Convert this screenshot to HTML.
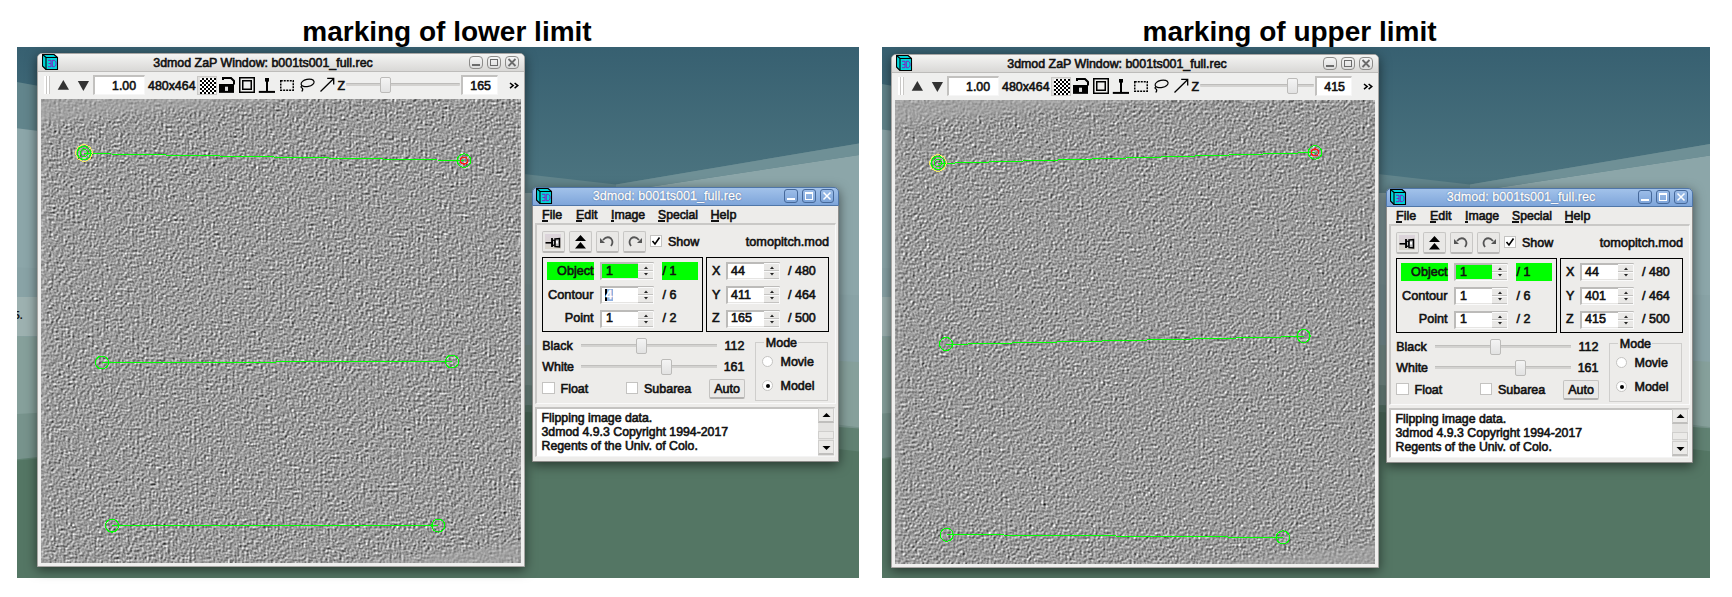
<!DOCTYPE html>
<html><head><meta charset="utf-8"><style>
html,body{margin:0;padding:0;}
body{width:1732px;height:597px;position:relative;overflow:hidden;background:#fff;font-family:"Liberation Sans", sans-serif;}
.t{position:absolute;white-space:pre;line-height:1;font-family:"Liberation Sans", sans-serif;-webkit-text-stroke:0.6px currentColor;}
.h{-webkit-text-stroke:0;}
</style></head><body>
<div class="t" style="left:147px;width:600px;text-align:center;top:17.80px;font-size:28px;color:#000;font-weight:700;-webkit-text-stroke:0">marking of lower limit</div>
<div class="t" style="left:989.5px;width:600px;text-align:center;top:17.80px;font-size:28px;color:#000;font-weight:700;-webkit-text-stroke:0">marking of upper limit</div>
<div style="position:absolute;left:17px;top:47px;width:842px;height:531px;overflow:hidden"><div style="position:absolute;left:-17px;top:-47px;width:1000px;height:600px"><svg width="1000" height="600" style="position:absolute;left:0;top:0">
<defs><linearGradient id="tg" x1="0" y1="0" x2="0" y2="1"><stop offset="0" stop-color="#365f70"/><stop offset="1" stop-color="#4e7681"/></linearGradient></defs>
<rect x="0" y="40" width="1000" height="160" fill="url(#tg)"/>
<polygon points="0,79 524,174 616,184.5 859,143.5 1000,120 1000,600 0,600" fill="#62858c"/>
<polygon points="0,126 524,193 616,192 859,155 1000,134 1000,600 0,600" fill="#8ca6a9"/>
<polygon points="616,184.5 859,143.5 880,140 880,155 859,155 616,192" fill="#6f9096"/>
<polygon points="0,267 1000,300 1000,600 0,600" fill="#89a3a6"/>
<rect x="0" y="297" width="40" height="39" fill="#9db1b0"/>
<polygon points="0,336 528,345 880,363 1000,363 1000,600 0,600" fill="#86a09b"/>
<polygon points="0,415 528,385 880,430 1000,430 1000,600 0,600" fill="#77938c"/><polygon points="0,461 528,405 880,430 1000,430 1000,600 0,600" fill="#608172"/>
<polygon points="0,462 528,412 880,454 1000,454 1000,600 0,600" fill="#547664"/>
<text x="14" y="319" font-family="Liberation Sans" font-size="10.5" font-weight="bold" fill="#111">5.</text>
</svg></div></div>
<div style="position:absolute;left:882px;top:47px;width:828px;height:531px;overflow:hidden"><div style="position:absolute;left:-28px;top:-47px;width:1000px;height:600px"><svg width="1000" height="600" style="position:absolute;left:0;top:0">
<defs><linearGradient id="tg2" x1="0" y1="0" x2="0" y2="1"><stop offset="0" stop-color="#365f70"/><stop offset="1" stop-color="#4e7681"/></linearGradient></defs>
<rect x="0" y="40" width="1000" height="160" fill="url(#tg2)"/>
<polygon points="0,79 524,174 616,184.5 859,143.5 1000,120 1000,600 0,600" fill="#62858c"/>
<polygon points="0,126 524,193 616,192 859,155 1000,134 1000,600 0,600" fill="#8ca6a9"/>
<polygon points="616,184.5 859,143.5 880,140 880,155 859,155 616,192" fill="#6f9096"/>
<polygon points="0,267 1000,300 1000,600 0,600" fill="#89a3a6"/>
<rect x="0" y="297" width="40" height="39" fill="#9db1b0"/>
<polygon points="0,336 528,345 880,363 1000,363 1000,600 0,600" fill="#86a09b"/>
<polygon points="0,415 528,385 880,430 1000,430 1000,600 0,600" fill="#77938c"/><polygon points="0,461 528,405 880,430 1000,430 1000,600 0,600" fill="#608172"/>
<polygon points="0,462 528,412 880,454 1000,454 1000,600 0,600" fill="#547664"/>
<text x="14" y="319" font-family="Liberation Sans" font-size="10.5" font-weight="bold" fill="#111">5.</text>
</svg></div></div>
<div style="position:absolute;left:0px;top:0px;width:1px;height:1px"><div style="position:absolute;left:37px;top:53px;width:488px;height:514px;background:#efefee;border-radius:5px 5px 0 0;box-shadow:0 3px 12px rgba(0,0,0,0.55);border:1px solid #a8a6a4;box-sizing:border-box"></div>
<div style="position:absolute;left:38px;top:54px;width:486px;height:18px;background:linear-gradient(#f4f4f3,#d9d8d6);border-radius:4px 4px 0 0;border-bottom:1px solid #bdbcba;box-sizing:border-box"></div>
<svg style="position:absolute;left:42px;top:54px" width="17" height="17" viewBox="0 0 17 17">
<path d="M0.5 0.5 L12 0.5 L15.5 3.5 L15.5 15.5 L4 15.5 L0.5 12 Z" fill="#00d4d8" stroke="#000" stroke-width="1.1" stroke-linejoin="round"/>
<path d="M0.5 0.5 L4 3.5 L15.5 3.5 M4 3.5 L4 15.5" fill="none" stroke="#000" stroke-width="1.1"/>
<path d="M6 6.3 L9 6.3 L9 12.7 L6 12.7 M6.5 9.5 L9 9.5 M10.3 6.3 L12.5 6.3 L14 8 L14 11 L12.5 12.7 L10.3 12.7 Z" fill="none" stroke="#9010c0" stroke-width="0.9"/>
</svg>
<div class="t" style="left:-37px;width:600px;text-align:center;top:57.00px;font-size:12.4px;color:#111;font-weight:400;">3dmod ZaP Window: b001ts001_full.rec</div>
<div style="position:absolute;left:469px;top:56px;width:14px;height:13px;border:1px solid #8d8c8a;border-radius:4px;box-sizing:border-box;background:linear-gradient(#f5f5f5,#dcdcdc)"></div>
<div style="position:absolute;left:487px;top:56px;width:14px;height:13px;border:1px solid #8d8c8a;border-radius:4px;box-sizing:border-box;background:linear-gradient(#f5f5f5,#dcdcdc)"></div>
<div style="position:absolute;left:505px;top:56px;width:14px;height:13px;border:1px solid #8d8c8a;border-radius:4px;box-sizing:border-box;background:linear-gradient(#f5f5f5,#dcdcdc)"></div>
<div style="position:absolute;left:472px;top:64px;width:8px;height:2px;background:#6b6b6b"></div>
<div style="position:absolute;left:490px;top:59px;width:8px;height:7px;border:1.5px solid #6b6b6b;box-sizing:border-box"></div>
<svg style="position:absolute;left:507px;top:58px" width="10" height="9"><path d="M1.5 1 L8.5 8 M8.5 1 L1.5 8" stroke="#6b6b6b" stroke-width="1.8"/></svg>
<div style="position:absolute;left:44px;top:76px;width:2px;height:18px;background:#fff;border-right:1px solid #c9c8c6"></div>
<div style="position:absolute;left:47px;top:76px;width:2px;height:18px;background:#fff;border-right:1px solid #c9c8c6"></div>
<svg style="position:absolute;left:57px;top:80px" width="33" height="12"><path d="M0.7 9.8 L6.35 0.1 L12 9.8Z" fill="#333"/><path d="M20.8 1 L32 1 L26.4 11Z" fill="#333"/></svg>
<div style="position:absolute;left:93px;top:75px;width:52px;height:20px;background:#fff;border-top:2px solid #c2c1bf;border-left:2px solid #c2c1bf;border-right:1px solid #f6f6f6;border-bottom:1px solid #f6f6f6;box-sizing:border-box"></div>
<div class="t" style="left:-264px;width:400px;text-align:right;top:79.89px;font-size:12.3px;color:#111;font-weight:400;">1.00</div>
<div class="t" style="left:148px;top:79.80px;font-size:12.4px;color:#111;font-weight:400;">480x464</div>
<div style="position:absolute;left:197px;top:76px;width:20px;height:19px;background:#e0dfdd;border:1px solid #c9c8c6;box-sizing:border-box"></div>
<svg style="position:absolute;left:200px;top:78px" width="16" height="16"><defs><pattern id="ck3" width="4" height="4" patternUnits="userSpaceOnUse"><rect width="4" height="4" fill="#fff"/><rect x="2" width="2" height="2" fill="#000"/><rect y="2" width="2" height="2" fill="#000"/></pattern></defs><rect width="16" height="16" fill="url(#ck3)"/></svg>
<svg style="position:absolute;left:218px;top:76px" width="17" height="17"><path d="M5 4 L5 2 L13 2 L16 5 L16 8.5" fill="none" stroke="#000" stroke-width="2" stroke-linejoin="miter"/><rect x="1" y="8" width="15" height="8.85" fill="#000"/><rect x="7" y="10.7" width="3" height="4.2" fill="#ddd"/></svg>
<svg style="position:absolute;left:239px;top:77px" width="16" height="16"><rect x="0.75" y="0.75" width="14.5" height="14.5" fill="none" stroke="#000" stroke-width="1.5"/><rect x="3.75" y="3.75" width="8.5" height="8.5" fill="none" stroke="#000" stroke-width="1.5"/></svg>
<svg style="position:absolute;left:258px;top:77px" width="18" height="17"><rect x="7" y="1" width="4" height="3.6" fill="#000"/><rect x="8" y="3" width="2" height="11" fill="#000"/><rect x="0.8" y="13.9" width="16.2" height="2" fill="#000"/></svg>
<svg style="position:absolute;left:280px;top:80px" width="15" height="12"><rect x="0.75" y="0.75" width="12.5" height="9.4" fill="none" stroke="#000" stroke-width="1.5" stroke-dasharray="2 1"/></svg>
<svg style="position:absolute;left:299px;top:78px" width="17" height="15"><ellipse cx="8.6" cy="4.9" rx="6.6" ry="3.6" transform="rotate(-12 8.6 4.9)" fill="none" stroke="#000" stroke-width="1.2"/><path d="M3.2 7.5 Q1 9 3 10 Q4.5 11 2.8 13.5" fill="none" stroke="#000" stroke-width="1.3"/></svg>
<svg style="position:absolute;left:320px;top:77px" width="15" height="16"><path d="M0.5 14.5 L13.5 1.8 M7.2 1.3 L13.7 1.3 L13.7 7.6" fill="none" stroke="#000" stroke-width="1.3"/></svg>
<div class="t" style="left:337.5px;top:79.80px;font-size:12.4px;color:#111;font-weight:400;">Z</div>
<div style="position:absolute;left:346px;top:83px;width:114px;height:3px;background:#d3d2d0;border-top:1px solid #bdbcba;box-sizing:border-box;border-radius:1px"></div>
<div style="position:absolute;left:380px;top:77px;width:11px;height:16px;background:linear-gradient(#f4f4f4,#e2e2e2);border:1px solid #bcbbb9;border-radius:2px;box-sizing:border-box"></div>
<div style="position:absolute;left:461px;top:75px;width:37px;height:20px;background:#fff;border-top:2px solid #c2c1bf;border-left:2px solid #c2c1bf;border-right:1px solid #f6f6f6;border-bottom:1px solid #f6f6f6;box-sizing:border-box"></div>
<div class="t" style="left:91px;width:400px;text-align:right;top:79.80px;font-size:12.4px;color:#111;font-weight:400;">165</div>
<svg style="position:absolute;left:509px;top:82px" width="11" height="8"><path d="M1 1 L4.2 3.6 L1 6.2 M5.6 1 L8.8 3.6 L5.6 6.2" fill="none" stroke="#000" stroke-width="1.5"/></svg>
<svg style="position:absolute;left:41px;top:99px" width="480" height="464"><defs><filter id="nz3" x="0" y="0" width="100%" height="100%" color-interpolation-filters="sRGB"><feTurbulence type="fractalNoise" baseFrequency="0.42" numOctaves="3" seed="3"/><feColorMatrix type="matrix" values="0.33 0.33 0.33 0 0  0.33 0.33 0.33 0 0  0.33 0.33 0.33 0 0  0 0 0 0 1"/><feConvolveMatrix order="3" kernelMatrix="-2 -1 0 -1 0 1 0 1 2" divisor="5" bias="0.5" preserveAlpha="true"/><feComponentTransfer><feFuncR type="linear" slope="1.75" intercept="-0.27"/><feFuncG type="linear" slope="1.75" intercept="-0.27"/><feFuncB type="linear" slope="1.75" intercept="-0.27"/></feComponentTransfer></filter></defs><rect width="480" height="464" fill="#888" filter="url(#nz3)"/></svg>
<svg style="position:absolute;left:0;top:0" width="600" height="600"><defs><filter id="bl3"><feGaussianBlur stdDeviation="3"/></filter><clipPath id="cim3"><rect x="41" y="99" width="480" height="464"/></clipPath></defs><g clip-path="url(#cim3)"><polygon points="30,90 360,90 250,104 160,111 30,124" fill="#a8a8a8" opacity="0.6" filter="url(#bl3)"/><polygon points="310,570 530,542 530,570" fill="#a6a6a6" opacity="0.6" filter="url(#bl3)"/><rect x="35" y="98" width="12" height="464" fill="#aaa" opacity="0.4" filter="url(#bl3)"/></g></svg>
<svg style="position:absolute;left:0;top:0" width="600" height="597" shape-rendering="crispEdges"><line x1="84" y1="153.5" x2="464" y2="160.5" stroke="#00ff00" stroke-width="1"/><circle cx="84" cy="153" r="8.3" fill="none" stroke="#f4f060" stroke-width="1"/><circle cx="84" cy="153" r="6.6" fill="none" stroke="#00ff00" stroke-width="1.2"/><circle cx="84" cy="153" r="3.6" fill="none" stroke="#00ff00" stroke-width="1.1"/><circle cx="464" cy="160.6" r="6.8" fill="none" stroke="#00ff00" stroke-width="1.1"/><circle cx="464" cy="160.6" r="3.5" fill="none" stroke="#ff1818" stroke-width="1.3"/><line x1="102" y1="362.5" x2="452" y2="361.5" stroke="#00ff00" stroke-width="1"/><circle cx="102" cy="362.5" r="6.5" fill="none" stroke="#00ff00" stroke-width="1.1"/><circle cx="452" cy="361.5" r="6.5" fill="none" stroke="#00ff00" stroke-width="1.1"/><line x1="112" y1="525.5" x2="438.3" y2="525.5" stroke="#00ff00" stroke-width="1"/><circle cx="112" cy="525.6" r="6.5" fill="none" stroke="#00ff00" stroke-width="1.1"/><circle cx="438.3" cy="525.6" r="6.5" fill="none" stroke="#00ff00" stroke-width="1.1"/></svg>
<div style="position:absolute;left:532px;top:187px;width:307px;height:275px;background:#edecea;border:1px solid #8e8d8b;border-radius:5px 5px 0 0;box-sizing:border-box;box-shadow:0 3px 12px rgba(0,0,0,0.55)"></div>
<div style="position:absolute;left:532px;top:187px;width:307px;height:19px;background:linear-gradient(#a2c2ea,#7ea5da);border:1px solid #4f76a8;border-radius:5px 5px 0 0;box-sizing:border-box"></div>
<svg style="position:absolute;left:536px;top:188px" width="17" height="17" viewBox="0 0 17 17">
<path d="M0.5 0.5 L12 0.5 L15.5 3.5 L15.5 15.5 L4 15.5 L0.5 12 Z" fill="#00d4d8" stroke="#000" stroke-width="1.1" stroke-linejoin="round"/>
<path d="M0.5 0.5 L4 3.5 L15.5 3.5 M4 3.5 L4 15.5" fill="none" stroke="#000" stroke-width="1.1"/>
<path d="M6 6.3 L9 6.3 L9 12.7 L6 12.7 M6.5 9.5 L9 9.5 M10.3 6.3 L12.5 6.3 L14 8 L14 11 L12.5 12.7 L10.3 12.7 Z" fill="none" stroke="#9010c0" stroke-width="0.9"/>
</svg>
<div class="t" style="left:367px;width:600px;text-align:center;top:190.33px;font-size:12.6px;color:#fff;font-weight:400;-webkit-text-stroke:0.35px #fff;text-shadow:0 0 1.2px #2c4c80,0 0 1px #2c4c80">3dmod: b001ts001_full.rec</div>
<div style="position:absolute;left:784px;top:189px;width:14px;height:14px;border:1px solid #46699a;border-radius:3px;box-sizing:border-box;background:linear-gradient(#9cbde8,#7ea5da)"></div>
<div style="position:absolute;left:802px;top:189px;width:14px;height:14px;border:1px solid #46699a;border-radius:3px;box-sizing:border-box;background:linear-gradient(#9cbde8,#7ea5da)"></div>
<div style="position:absolute;left:820px;top:189px;width:14px;height:14px;border:1px solid #46699a;border-radius:3px;box-sizing:border-box;background:linear-gradient(#9cbde8,#7ea5da)"></div>
<div style="position:absolute;left:787px;top:198px;width:8px;height:2px;background:#fff"></div>
<div style="position:absolute;left:805px;top:192px;width:8px;height:8px;border:1.5px solid #fff;border-top-width:2.5px;box-sizing:border-box"></div>
<svg style="position:absolute;left:822px;top:191px" width="10" height="10"><path d="M1.5 1.5 L8.5 8.5 M8.5 1.5 L1.5 8.5" stroke="#fff" stroke-width="1.5"/></svg>
<div class="t" style="left:542px;top:208.92px;font-size:12.5px;color:#111;font-weight:400;">File</div>
<div style="position:absolute;left:542px;top:220px;width:6px;height:1.6px;background:#111"></div>
<div class="t" style="left:576px;top:208.92px;font-size:12.5px;color:#111;font-weight:400;">Edit</div>
<div style="position:absolute;left:576px;top:220px;width:6px;height:1.6px;background:#111"></div>
<div class="t" style="left:611px;top:209.09px;font-size:12.3px;color:#111;font-weight:400;">Image</div>
<div style="position:absolute;left:611px;top:220px;width:3px;height:1.6px;background:#111"></div>
<div class="t" style="left:658px;top:209.17px;font-size:12.2px;color:#111;font-weight:400;">Special</div>
<div style="position:absolute;left:658px;top:220px;width:7px;height:1.6px;background:#111"></div>
<div class="t" style="left:710.5px;top:208.83px;font-size:12.6px;color:#111;font-weight:400;">Help</div>
<div style="position:absolute;left:710.5px;top:220px;width:8px;height:1.6px;background:#111"></div>
<div style="position:absolute;left:535px;top:223px;width:301px;height:181px;border-top:2px solid #c9c8c6;border-left:2px solid #c9c8c6;border-right:1px solid #fafafa;border-bottom:1px solid #fafafa;box-sizing:border-box"></div>
<div style="position:absolute;left:542px;top:231px;width:23px;height:22px;background:#e9e8e6;border:1px solid #c8c7c5;border-bottom:2px solid #b9b8b6;border-radius:2px;box-sizing:border-box"></div>
<div style="position:absolute;left:569px;top:231px;width:23px;height:22px;background:#e9e8e6;border:1px solid #c8c7c5;border-bottom:2px solid #b9b8b6;border-radius:2px;box-sizing:border-box"></div>
<div style="position:absolute;left:596px;top:231px;width:23px;height:22px;background:#e9e8e6;border:1px solid #c8c7c5;border-bottom:2px solid #b9b8b6;border-radius:2px;box-sizing:border-box"></div>
<div style="position:absolute;left:623px;top:231px;width:23px;height:22px;background:#e9e8e6;border:1px solid #c8c7c5;border-bottom:2px solid #b9b8b6;border-radius:2px;box-sizing:border-box"></div>
<div style="position:absolute;left:545px;top:234px;width:16px;height:15px;background:linear-gradient(#dcd4dc,#d8d5cb)"></div>
<svg style="position:absolute;left:545px;top:234px" width="17" height="16"><path d="M0.5 8.8 L7 8.8" stroke="#000" stroke-width="1.6"/><path d="M7 4 L7 13" stroke="#000" stroke-width="1.8"/><path d="M7.5 6 L10 6.8 L10 10.8 L7.5 11.6 Z" fill="#ddd" stroke="#000" stroke-width="1.2"/><path d="M10 5 L14.5 4.5 L14.5 13 L10 12.5 Z" fill="#bbb" stroke="#000" stroke-width="1.5"/><rect x="11" y="7" width="2" height="2.5" fill="#fff"/></svg>
<svg style="position:absolute;left:573px;top:234px" width="15" height="16"><path d="M7.5 1 L13 7 L2 7Z M7.5 8 L13 14.5 L2 14.5Z" fill="#000"/></svg>
<svg style="position:absolute;left:599px;top:234px" width="17" height="16"><path d="M4 6 Q8 1.5 12 4.5 Q15 8 12 12" fill="none" stroke="#555" stroke-width="1.8"/><path d="M1 4 L6 9 L1 9Z" fill="#555"/></svg>
<svg style="position:absolute;left:626px;top:234px" width="17" height="16"><path d="M13 6 Q9 1.5 5 4.5 Q2 8 5 12" fill="none" stroke="#555" stroke-width="1.8"/><path d="M16 4 L11 9 L16 9Z" fill="#555"/></svg>
<div style="position:absolute;left:650px;top:235px;width:12px;height:12px;background:#fff;border:1px solid #c4c3c1;box-sizing:border-box"></div>
<svg style="position:absolute;left:651px;top:236px" width="10" height="10"><path d="M1.5 5 L4 8 L8.5 1.5" fill="none" stroke="#000" stroke-width="1.6"/></svg>
<div class="t" style="left:668px;top:235.92px;font-size:12.5px;color:#111;font-weight:400;">Show</div>
<div class="t" style="left:429px;width:400px;text-align:right;top:235.75px;font-size:12.7px;color:#111;font-weight:400;">tomopitch.mod</div>
<div style="position:absolute;left:542px;top:257px;width:161px;height:75px;border:1px solid #000;box-sizing:border-box"></div>
<div style="position:absolute;left:547px;top:262px;width:47px;height:18px;background:#00ff00"></div>
<div class="t" style="left:193.5px;width:400px;text-align:right;top:264.93px;font-size:12.6px;color:#111;font-weight:400;">Object</div>
<div style="position:absolute;left:600px;top:262px;width:54px;height:18px;background:#e6e5e3;border-top:2px solid #bcbbb9;border-left:2px solid #bcbbb9;border-right:1px solid #fafafa;border-bottom:1px solid #fafafa;box-sizing:border-box"></div><div style="position:absolute;left:602px;top:264px;width:36px;height:14px;background:#00ff00;"></div><div style="position:absolute;left:638px;top:263px;width:15px;height:8px;background:#e9e8e6;border-top:1px solid #fafafa;border-bottom:1px solid #c4c3c1;box-sizing:border-box"></div><div style="position:absolute;left:638px;top:271px;width:15px;height:8px;background:#e9e8e6;border-top:1px solid #fafafa;border-bottom:1px solid #c4c3c1;box-sizing:border-box"></div><svg style="position:absolute;left:642.5px;top:265px" width="6" height="12"><path d="M1 4 L3 1.5 L5 4Z" fill="#222"/><path d="M1 8 L3 10.5 L5 8Z" fill="#222"/></svg>
<div class="t" style="left:606px;top:265.42px;font-size:12.5px;color:#111;font-weight:400;">1</div>
<div style="position:absolute;left:662px;top:262px;width:36px;height:18px;background:#00ff00"></div>
<div class="t" style="left:662.5px;top:265.02px;font-size:12.5px;color:#111;font-weight:400;">/ 1</div>
<div class="t" style="left:193.5px;width:400px;text-align:right;top:288.56px;font-size:12.8px;color:#111;font-weight:400;">Contour</div>
<div style="position:absolute;left:600px;top:286px;width:54px;height:18px;background:#e6e5e3;border-top:2px solid #bcbbb9;border-left:2px solid #bcbbb9;border-right:1px solid #fafafa;border-bottom:1px solid #fafafa;box-sizing:border-box"></div><div style="position:absolute;left:602px;top:288px;width:36px;height:14px;background:#fff;"></div><div style="position:absolute;left:638px;top:287px;width:15px;height:8px;background:#e9e8e6;border-top:1px solid #fafafa;border-bottom:1px solid #c4c3c1;box-sizing:border-box"></div><div style="position:absolute;left:638px;top:295px;width:15px;height:8px;background:#e9e8e6;border-top:1px solid #fafafa;border-bottom:1px solid #c4c3c1;box-sizing:border-box"></div><svg style="position:absolute;left:642.5px;top:289px" width="6" height="12"><path d="M1 4 L3 1.5 L5 4Z" fill="#222"/><path d="M1 8 L3 10.5 L5 8Z" fill="#222"/></svg>
<div style="position:absolute;left:605px;top:289px;width:1.5px;height:12px;background:#000"></div>
<div style="position:absolute;left:606.5px;top:289px;width:6px;height:12px;background:#8eb0e0"></div>
<div class="t" style="left:605.5px;top:289.22px;font-size:12.5px;color:#fff;font-weight:400;">4</div>
<div class="t" style="left:662.5px;top:288.82px;font-size:12.5px;color:#111;font-weight:400;">/ 6</div>
<div class="t" style="left:193.5px;width:400px;text-align:right;top:312.03px;font-size:12.6px;color:#111;font-weight:400;">Point</div>
<div style="position:absolute;left:600px;top:310px;width:54px;height:18px;background:#e6e5e3;border-top:2px solid #bcbbb9;border-left:2px solid #bcbbb9;border-right:1px solid #fafafa;border-bottom:1px solid #fafafa;box-sizing:border-box"></div><div style="position:absolute;left:602px;top:312px;width:36px;height:14px;background:#fff;"></div><div style="position:absolute;left:638px;top:311px;width:15px;height:8px;background:#e9e8e6;border-top:1px solid #fafafa;border-bottom:1px solid #c4c3c1;box-sizing:border-box"></div><div style="position:absolute;left:638px;top:319px;width:15px;height:8px;background:#e9e8e6;border-top:1px solid #fafafa;border-bottom:1px solid #c4c3c1;box-sizing:border-box"></div><svg style="position:absolute;left:642.5px;top:313px" width="6" height="12"><path d="M1 4 L3 1.5 L5 4Z" fill="#222"/><path d="M1 8 L3 10.5 L5 8Z" fill="#222"/></svg>
<div class="t" style="left:606px;top:312.42px;font-size:12.5px;color:#111;font-weight:400;">1</div>
<div class="t" style="left:662.5px;top:312.12px;font-size:12.5px;color:#111;font-weight:400;">/ 2</div>
<div style="position:absolute;left:706px;top:257px;width:123px;height:75px;border:1px solid #000;box-sizing:border-box"></div>
<div class="t" style="left:712px;top:265.02px;font-size:12.5px;color:#111;font-weight:400;">X</div>
<div style="position:absolute;left:726px;top:262px;width:54px;height:18px;background:#e6e5e3;border-top:2px solid #bcbbb9;border-left:2px solid #bcbbb9;border-right:1px solid #fafafa;border-bottom:1px solid #fafafa;box-sizing:border-box"></div><div style="position:absolute;left:728px;top:264px;width:36px;height:14px;background:#fff;"></div><div style="position:absolute;left:764px;top:263px;width:15px;height:8px;background:#e9e8e6;border-top:1px solid #fafafa;border-bottom:1px solid #c4c3c1;box-sizing:border-box"></div><div style="position:absolute;left:764px;top:271px;width:15px;height:8px;background:#e9e8e6;border-top:1px solid #fafafa;border-bottom:1px solid #c4c3c1;box-sizing:border-box"></div><svg style="position:absolute;left:768.5px;top:265px" width="6" height="12"><path d="M1 4 L3 1.5 L5 4Z" fill="#222"/><path d="M1 8 L3 10.5 L5 8Z" fill="#222"/></svg>
<div class="t" style="left:731px;top:265.32px;font-size:12.5px;color:#111;font-weight:400;">44</div>
<div class="t" style="left:788px;top:265.02px;font-size:12.5px;color:#111;font-weight:400;">/ 480</div>
<div class="t" style="left:712px;top:288.82px;font-size:12.5px;color:#111;font-weight:400;">Y</div>
<div style="position:absolute;left:726px;top:286px;width:54px;height:18px;background:#e6e5e3;border-top:2px solid #bcbbb9;border-left:2px solid #bcbbb9;border-right:1px solid #fafafa;border-bottom:1px solid #fafafa;box-sizing:border-box"></div><div style="position:absolute;left:728px;top:288px;width:36px;height:14px;background:#fff;"></div><div style="position:absolute;left:764px;top:287px;width:15px;height:8px;background:#e9e8e6;border-top:1px solid #fafafa;border-bottom:1px solid #c4c3c1;box-sizing:border-box"></div><div style="position:absolute;left:764px;top:295px;width:15px;height:8px;background:#e9e8e6;border-top:1px solid #fafafa;border-bottom:1px solid #c4c3c1;box-sizing:border-box"></div><svg style="position:absolute;left:768.5px;top:289px" width="6" height="12"><path d="M1 4 L3 1.5 L5 4Z" fill="#222"/><path d="M1 8 L3 10.5 L5 8Z" fill="#222"/></svg>
<div class="t" style="left:731px;top:289.12px;font-size:12.5px;color:#111;font-weight:400;">411</div>
<div class="t" style="left:788px;top:288.82px;font-size:12.5px;color:#111;font-weight:400;">/ 464</div>
<div class="t" style="left:712px;top:312.12px;font-size:12.5px;color:#111;font-weight:400;">Z</div>
<div style="position:absolute;left:726px;top:310px;width:54px;height:18px;background:#e6e5e3;border-top:2px solid #bcbbb9;border-left:2px solid #bcbbb9;border-right:1px solid #fafafa;border-bottom:1px solid #fafafa;box-sizing:border-box"></div><div style="position:absolute;left:728px;top:312px;width:36px;height:14px;background:#fff;"></div><div style="position:absolute;left:764px;top:311px;width:15px;height:8px;background:#e9e8e6;border-top:1px solid #fafafa;border-bottom:1px solid #c4c3c1;box-sizing:border-box"></div><div style="position:absolute;left:764px;top:319px;width:15px;height:8px;background:#e9e8e6;border-top:1px solid #fafafa;border-bottom:1px solid #c4c3c1;box-sizing:border-box"></div><svg style="position:absolute;left:768.5px;top:313px" width="6" height="12"><path d="M1 4 L3 1.5 L5 4Z" fill="#222"/><path d="M1 8 L3 10.5 L5 8Z" fill="#222"/></svg>
<div class="t" style="left:731px;top:312.42px;font-size:12.5px;color:#111;font-weight:400;">165</div>
<div class="t" style="left:788px;top:312.12px;font-size:12.5px;color:#111;font-weight:400;">/ 500</div>
<div class="t" style="left:542.3px;top:340.30px;font-size:12.4px;color:#111;font-weight:400;">Black</div>
<div class="t" style="left:542.3px;top:360.70px;font-size:12.4px;color:#111;font-weight:400;">White</div>
<div style="position:absolute;left:581px;top:344px;width:136px;height:3px;background:#d3d2d0;border-top:1px solid #c0bfbd;box-sizing:border-box"></div>
<div style="position:absolute;left:581px;top:365px;width:136px;height:3px;background:#d3d2d0;border-top:1px solid #c0bfbd;box-sizing:border-box"></div>
<div style="position:absolute;left:636px;top:338px;width:11px;height:16px;background:linear-gradient(#f4f4f4,#e2e2e2);border:1px solid #bcbbb9;border-radius:2px;box-sizing:border-box"></div>
<div style="position:absolute;left:661px;top:359px;width:11px;height:16px;background:linear-gradient(#f4f4f4,#e2e2e2);border:1px solid #bcbbb9;border-radius:2px;box-sizing:border-box"></div>
<div class="t" style="left:344.5px;width:400px;text-align:right;top:340.22px;font-size:12.5px;color:#111;font-weight:400;">112</div>
<div class="t" style="left:344.5px;width:400px;text-align:right;top:360.62px;font-size:12.5px;color:#111;font-weight:400;">161</div>
<div style="position:absolute;left:542px;top:382px;width:13px;height:12px;background:#fff;border:1px solid #c4c3c1;box-sizing:border-box"></div>
<div class="t" style="left:560.5px;top:382.72px;font-size:12.5px;color:#111;font-weight:400;">Float</div>
<div style="position:absolute;left:626px;top:382px;width:12px;height:12px;background:#fff;border:1px solid #c4c3c1;box-sizing:border-box"></div>
<div class="t" style="left:644px;top:382.72px;font-size:12.5px;color:#111;font-weight:400;">Subarea</div>
<div style="position:absolute;left:709px;top:379px;width:36px;height:20px;background:#ebeae8;border:1px solid #c4c3c1;border-bottom:2px solid #b4b3b1;border-radius:2px;box-sizing:border-box"></div>
<div class="t" style="left:427px;width:600px;text-align:center;top:382.72px;font-size:12.5px;color:#111;font-weight:400;">Auto</div>
<div style="position:absolute;left:755px;top:342px;width:73px;height:59px;border:1px solid #cfcecc;box-sizing:border-box"></div>
<div style="position:absolute;left:764px;top:336px;width:34px;height:10px;background:#edecea"></div>
<div class="t" style="left:765.8px;top:337.12px;font-size:12.5px;color:#111;font-weight:400;">Mode</div>
<div style="position:absolute;left:762px;top:356px;width:11px;height:11px;background:#fff;border:1px solid #c4c3c1;border-radius:50%;box-sizing:border-box"></div>
<div class="t" style="left:780.5px;top:355.92px;font-size:12.5px;color:#111;font-weight:400;">Movie</div>
<div style="position:absolute;left:762px;top:380px;width:11px;height:11px;background:#fff;border:1px solid #c4c3c1;border-radius:50%;box-sizing:border-box"></div>
<div style="position:absolute;left:765.5px;top:383.5px;width:4px;height:4px;background:#000;border-radius:50%"></div>
<div class="t" style="left:780.5px;top:380.02px;font-size:12.5px;color:#111;font-weight:400;">Model</div>
<div style="position:absolute;left:535px;top:407px;width:300px;height:50px;background:#fff;border-top:2px solid #c4c3c1;border-left:2px solid #c4c3c1;border-right:1px solid #f4f4f4;border-bottom:1px solid #f4f4f4;box-sizing:border-box"></div>
<div class="t" style="left:541.5px;top:412.29px;font-size:12.3px;color:#111;font-weight:400;">Flipping image data.</div>
<div class="t" style="left:541.5px;top:425.79px;font-size:12.3px;color:#111;font-weight:400;">3dmod 4.9.3 Copyright 1994-2017</div>
<div class="t" style="left:541.5px;top:439.79px;font-size:12.3px;color:#111;font-weight:400;">Regents of the Univ. of Colo.</div>
<div style="position:absolute;left:818px;top:408px;width:16px;height:48px;background:#e4e3e1"></div>
<div style="position:absolute;left:818px;top:408px;width:16px;height:15px;background:#ebeae8;border:1px solid #d0cfcd;border-bottom:2px solid #c0bfbd;box-sizing:border-box"></div>
<div style="position:absolute;left:818px;top:431px;width:16px;height:8px;background:#ebeae8;border:1px solid #d0cfcd;box-sizing:border-box"></div>
<div style="position:absolute;left:818px;top:440px;width:16px;height:15px;background:#ebeae8;border:1px solid #d0cfcd;border-bottom:2px solid #c0bfbd;box-sizing:border-box"></div>
<svg style="position:absolute;left:822px;top:412px" width="9" height="40"><path d="M0.5 5 L4.5 1 L8.5 5Z" fill="#000"/><path d="M0.5 34 L4.5 38 L8.5 34Z" fill="#000"/></svg></div>
<div style="position:absolute;left:882px;top:0;width:828px;height:578px;overflow:hidden"><div style="position:absolute;left:-28px;top:1px;width:1px;height:1px"><div style="position:absolute;left:0px;top:0px;width:1px;height:1px"><div style="position:absolute;left:37px;top:53px;width:488px;height:514px;background:#efefee;border-radius:5px 5px 0 0;box-shadow:0 3px 12px rgba(0,0,0,0.55);border:1px solid #a8a6a4;box-sizing:border-box"></div>
<div style="position:absolute;left:38px;top:54px;width:486px;height:18px;background:linear-gradient(#f4f4f3,#d9d8d6);border-radius:4px 4px 0 0;border-bottom:1px solid #bdbcba;box-sizing:border-box"></div>
<svg style="position:absolute;left:42px;top:54px" width="17" height="17" viewBox="0 0 17 17">
<path d="M0.5 0.5 L12 0.5 L15.5 3.5 L15.5 15.5 L4 15.5 L0.5 12 Z" fill="#00d4d8" stroke="#000" stroke-width="1.1" stroke-linejoin="round"/>
<path d="M0.5 0.5 L4 3.5 L15.5 3.5 M4 3.5 L4 15.5" fill="none" stroke="#000" stroke-width="1.1"/>
<path d="M6 6.3 L9 6.3 L9 12.7 L6 12.7 M6.5 9.5 L9 9.5 M10.3 6.3 L12.5 6.3 L14 8 L14 11 L12.5 12.7 L10.3 12.7 Z" fill="none" stroke="#9010c0" stroke-width="0.9"/>
</svg>
<div class="t" style="left:-37px;width:600px;text-align:center;top:57.00px;font-size:12.4px;color:#111;font-weight:400;">3dmod ZaP Window: b001ts001_full.rec</div>
<div style="position:absolute;left:469px;top:56px;width:14px;height:13px;border:1px solid #8d8c8a;border-radius:4px;box-sizing:border-box;background:linear-gradient(#f5f5f5,#dcdcdc)"></div>
<div style="position:absolute;left:487px;top:56px;width:14px;height:13px;border:1px solid #8d8c8a;border-radius:4px;box-sizing:border-box;background:linear-gradient(#f5f5f5,#dcdcdc)"></div>
<div style="position:absolute;left:505px;top:56px;width:14px;height:13px;border:1px solid #8d8c8a;border-radius:4px;box-sizing:border-box;background:linear-gradient(#f5f5f5,#dcdcdc)"></div>
<div style="position:absolute;left:472px;top:64px;width:8px;height:2px;background:#6b6b6b"></div>
<div style="position:absolute;left:490px;top:59px;width:8px;height:7px;border:1.5px solid #6b6b6b;box-sizing:border-box"></div>
<svg style="position:absolute;left:507px;top:58px" width="10" height="9"><path d="M1.5 1 L8.5 8 M8.5 1 L1.5 8" stroke="#6b6b6b" stroke-width="1.8"/></svg>
<div style="position:absolute;left:44px;top:76px;width:2px;height:18px;background:#fff;border-right:1px solid #c9c8c6"></div>
<div style="position:absolute;left:47px;top:76px;width:2px;height:18px;background:#fff;border-right:1px solid #c9c8c6"></div>
<svg style="position:absolute;left:57px;top:80px" width="33" height="12"><path d="M0.7 9.8 L6.35 0.1 L12 9.8Z" fill="#333"/><path d="M20.8 1 L32 1 L26.4 11Z" fill="#333"/></svg>
<div style="position:absolute;left:93px;top:75px;width:52px;height:20px;background:#fff;border-top:2px solid #c2c1bf;border-left:2px solid #c2c1bf;border-right:1px solid #f6f6f6;border-bottom:1px solid #f6f6f6;box-sizing:border-box"></div>
<div class="t" style="left:-264px;width:400px;text-align:right;top:79.89px;font-size:12.3px;color:#111;font-weight:400;">1.00</div>
<div class="t" style="left:148px;top:79.80px;font-size:12.4px;color:#111;font-weight:400;">480x464</div>
<div style="position:absolute;left:197px;top:76px;width:20px;height:19px;background:#e0dfdd;border:1px solid #c9c8c6;box-sizing:border-box"></div>
<svg style="position:absolute;left:200px;top:78px" width="16" height="16"><defs><pattern id="ck7" width="4" height="4" patternUnits="userSpaceOnUse"><rect width="4" height="4" fill="#fff"/><rect x="2" width="2" height="2" fill="#000"/><rect y="2" width="2" height="2" fill="#000"/></pattern></defs><rect width="16" height="16" fill="url(#ck7)"/></svg>
<svg style="position:absolute;left:218px;top:76px" width="17" height="17"><path d="M5 4 L5 2 L13 2 L16 5 L16 8.5" fill="none" stroke="#000" stroke-width="2" stroke-linejoin="miter"/><rect x="1" y="8" width="15" height="8.85" fill="#000"/><rect x="7" y="10.7" width="3" height="4.2" fill="#ddd"/></svg>
<svg style="position:absolute;left:239px;top:77px" width="16" height="16"><rect x="0.75" y="0.75" width="14.5" height="14.5" fill="none" stroke="#000" stroke-width="1.5"/><rect x="3.75" y="3.75" width="8.5" height="8.5" fill="none" stroke="#000" stroke-width="1.5"/></svg>
<svg style="position:absolute;left:258px;top:77px" width="18" height="17"><rect x="7" y="1" width="4" height="3.6" fill="#000"/><rect x="8" y="3" width="2" height="11" fill="#000"/><rect x="0.8" y="13.9" width="16.2" height="2" fill="#000"/></svg>
<svg style="position:absolute;left:280px;top:80px" width="15" height="12"><rect x="0.75" y="0.75" width="12.5" height="9.4" fill="none" stroke="#000" stroke-width="1.5" stroke-dasharray="2 1"/></svg>
<svg style="position:absolute;left:299px;top:78px" width="17" height="15"><ellipse cx="8.6" cy="4.9" rx="6.6" ry="3.6" transform="rotate(-12 8.6 4.9)" fill="none" stroke="#000" stroke-width="1.2"/><path d="M3.2 7.5 Q1 9 3 10 Q4.5 11 2.8 13.5" fill="none" stroke="#000" stroke-width="1.3"/></svg>
<svg style="position:absolute;left:320px;top:77px" width="15" height="16"><path d="M0.5 14.5 L13.5 1.8 M7.2 1.3 L13.7 1.3 L13.7 7.6" fill="none" stroke="#000" stroke-width="1.3"/></svg>
<div class="t" style="left:337.5px;top:79.80px;font-size:12.4px;color:#111;font-weight:400;">Z</div>
<div style="position:absolute;left:346px;top:83px;width:114px;height:3px;background:#d3d2d0;border-top:1px solid #bdbcba;box-sizing:border-box;border-radius:1px"></div>
<div style="position:absolute;left:433px;top:77px;width:11px;height:16px;background:linear-gradient(#f4f4f4,#e2e2e2);border:1px solid #bcbbb9;border-radius:2px;box-sizing:border-box"></div>
<div style="position:absolute;left:461px;top:75px;width:37px;height:20px;background:#fff;border-top:2px solid #c2c1bf;border-left:2px solid #c2c1bf;border-right:1px solid #f6f6f6;border-bottom:1px solid #f6f6f6;box-sizing:border-box"></div>
<div class="t" style="left:91px;width:400px;text-align:right;top:79.80px;font-size:12.4px;color:#111;font-weight:400;">415</div>
<svg style="position:absolute;left:509px;top:82px" width="11" height="8"><path d="M1 1 L4.2 3.6 L1 6.2 M5.6 1 L8.8 3.6 L5.6 6.2" fill="none" stroke="#000" stroke-width="1.5"/></svg>
<svg style="position:absolute;left:41px;top:99px" width="480" height="464"><defs><filter id="nz7" x="0" y="0" width="100%" height="100%" color-interpolation-filters="sRGB"><feTurbulence type="fractalNoise" baseFrequency="0.42" numOctaves="3" seed="7"/><feColorMatrix type="matrix" values="0.33 0.33 0.33 0 0  0.33 0.33 0.33 0 0  0.33 0.33 0.33 0 0  0 0 0 0 1"/><feConvolveMatrix order="3" kernelMatrix="-2 -1 0 -1 0 1 0 1 2" divisor="5" bias="0.5" preserveAlpha="true"/><feComponentTransfer><feFuncR type="linear" slope="1.75" intercept="-0.27"/><feFuncG type="linear" slope="1.75" intercept="-0.27"/><feFuncB type="linear" slope="1.75" intercept="-0.27"/></feComponentTransfer></filter></defs><rect width="480" height="464" fill="#888" filter="url(#nz7)"/></svg>
<svg style="position:absolute;left:0;top:0" width="600" height="600"><defs><filter id="bl7"><feGaussianBlur stdDeviation="3"/></filter><clipPath id="cim7"><rect x="41" y="99" width="480" height="464"/></clipPath></defs><g clip-path="url(#cim7)"><polygon points="30,90 360,90 250,104 160,111 30,124" fill="#a8a8a8" opacity="0.6" filter="url(#bl7)"/><polygon points="310,570 530,542 530,570" fill="#a6a6a6" opacity="0.6" filter="url(#bl7)"/><rect x="35" y="98" width="12" height="464" fill="#aaa" opacity="0.4" filter="url(#bl7)"/></g></svg>
<svg style="position:absolute;left:0;top:0" width="600" height="597" shape-rendering="crispEdges"><line x1="84" y1="162.5" x2="461" y2="151.5" stroke="#00ff00" stroke-width="1"/><circle cx="84" cy="162" r="8.3" fill="none" stroke="#f4f060" stroke-width="1"/><circle cx="84" cy="162" r="6.6" fill="none" stroke="#00ff00" stroke-width="1.2"/><circle cx="84" cy="162" r="3.6" fill="none" stroke="#00ff00" stroke-width="1.1"/><circle cx="461" cy="151.4" r="6.8" fill="none" stroke="#00ff00" stroke-width="1.1"/><circle cx="461" cy="151.4" r="3.5" fill="none" stroke="#ff1818" stroke-width="1.3"/><line x1="92" y1="343.5" x2="449.5999999999999" y2="335.5" stroke="#00ff00" stroke-width="1"/><circle cx="92" cy="343" r="6.5" fill="none" stroke="#00ff00" stroke-width="1.1"/><circle cx="449.5999999999999" cy="335" r="6.5" fill="none" stroke="#00ff00" stroke-width="1.1"/><line x1="92.70000000000005" y1="533.5" x2="429" y2="536.5" stroke="#00ff00" stroke-width="1"/><circle cx="92.70000000000005" cy="533.8" r="6.5" fill="none" stroke="#00ff00" stroke-width="1.1"/><circle cx="429" cy="536.3" r="6.5" fill="none" stroke="#00ff00" stroke-width="1.1"/></svg>
<div style="position:absolute;left:532px;top:187px;width:307px;height:275px;background:#edecea;border:1px solid #8e8d8b;border-radius:5px 5px 0 0;box-sizing:border-box;box-shadow:0 3px 12px rgba(0,0,0,0.55)"></div>
<div style="position:absolute;left:532px;top:187px;width:307px;height:19px;background:linear-gradient(#a2c2ea,#7ea5da);border:1px solid #4f76a8;border-radius:5px 5px 0 0;box-sizing:border-box"></div>
<svg style="position:absolute;left:536px;top:188px" width="17" height="17" viewBox="0 0 17 17">
<path d="M0.5 0.5 L12 0.5 L15.5 3.5 L15.5 15.5 L4 15.5 L0.5 12 Z" fill="#00d4d8" stroke="#000" stroke-width="1.1" stroke-linejoin="round"/>
<path d="M0.5 0.5 L4 3.5 L15.5 3.5 M4 3.5 L4 15.5" fill="none" stroke="#000" stroke-width="1.1"/>
<path d="M6 6.3 L9 6.3 L9 12.7 L6 12.7 M6.5 9.5 L9 9.5 M10.3 6.3 L12.5 6.3 L14 8 L14 11 L12.5 12.7 L10.3 12.7 Z" fill="none" stroke="#9010c0" stroke-width="0.9"/>
</svg>
<div class="t" style="left:367px;width:600px;text-align:center;top:190.33px;font-size:12.6px;color:#fff;font-weight:400;-webkit-text-stroke:0.35px #fff;text-shadow:0 0 1.2px #2c4c80,0 0 1px #2c4c80">3dmod: b001ts001_full.rec</div>
<div style="position:absolute;left:784px;top:189px;width:14px;height:14px;border:1px solid #46699a;border-radius:3px;box-sizing:border-box;background:linear-gradient(#9cbde8,#7ea5da)"></div>
<div style="position:absolute;left:802px;top:189px;width:14px;height:14px;border:1px solid #46699a;border-radius:3px;box-sizing:border-box;background:linear-gradient(#9cbde8,#7ea5da)"></div>
<div style="position:absolute;left:820px;top:189px;width:14px;height:14px;border:1px solid #46699a;border-radius:3px;box-sizing:border-box;background:linear-gradient(#9cbde8,#7ea5da)"></div>
<div style="position:absolute;left:787px;top:198px;width:8px;height:2px;background:#fff"></div>
<div style="position:absolute;left:805px;top:192px;width:8px;height:8px;border:1.5px solid #fff;border-top-width:2.5px;box-sizing:border-box"></div>
<svg style="position:absolute;left:822px;top:191px" width="10" height="10"><path d="M1.5 1.5 L8.5 8.5 M8.5 1.5 L1.5 8.5" stroke="#fff" stroke-width="1.5"/></svg>
<div class="t" style="left:542px;top:208.92px;font-size:12.5px;color:#111;font-weight:400;">File</div>
<div style="position:absolute;left:542px;top:220px;width:6px;height:1.6px;background:#111"></div>
<div class="t" style="left:576px;top:208.92px;font-size:12.5px;color:#111;font-weight:400;">Edit</div>
<div style="position:absolute;left:576px;top:220px;width:6px;height:1.6px;background:#111"></div>
<div class="t" style="left:611px;top:209.09px;font-size:12.3px;color:#111;font-weight:400;">Image</div>
<div style="position:absolute;left:611px;top:220px;width:3px;height:1.6px;background:#111"></div>
<div class="t" style="left:658px;top:209.17px;font-size:12.2px;color:#111;font-weight:400;">Special</div>
<div style="position:absolute;left:658px;top:220px;width:7px;height:1.6px;background:#111"></div>
<div class="t" style="left:710.5px;top:208.83px;font-size:12.6px;color:#111;font-weight:400;">Help</div>
<div style="position:absolute;left:710.5px;top:220px;width:8px;height:1.6px;background:#111"></div>
<div style="position:absolute;left:535px;top:223px;width:301px;height:181px;border-top:2px solid #c9c8c6;border-left:2px solid #c9c8c6;border-right:1px solid #fafafa;border-bottom:1px solid #fafafa;box-sizing:border-box"></div>
<div style="position:absolute;left:542px;top:231px;width:23px;height:22px;background:#e9e8e6;border:1px solid #c8c7c5;border-bottom:2px solid #b9b8b6;border-radius:2px;box-sizing:border-box"></div>
<div style="position:absolute;left:569px;top:231px;width:23px;height:22px;background:#e9e8e6;border:1px solid #c8c7c5;border-bottom:2px solid #b9b8b6;border-radius:2px;box-sizing:border-box"></div>
<div style="position:absolute;left:596px;top:231px;width:23px;height:22px;background:#e9e8e6;border:1px solid #c8c7c5;border-bottom:2px solid #b9b8b6;border-radius:2px;box-sizing:border-box"></div>
<div style="position:absolute;left:623px;top:231px;width:23px;height:22px;background:#e9e8e6;border:1px solid #c8c7c5;border-bottom:2px solid #b9b8b6;border-radius:2px;box-sizing:border-box"></div>
<div style="position:absolute;left:545px;top:234px;width:16px;height:15px;background:linear-gradient(#dcd4dc,#d8d5cb)"></div>
<svg style="position:absolute;left:545px;top:234px" width="17" height="16"><path d="M0.5 8.8 L7 8.8" stroke="#000" stroke-width="1.6"/><path d="M7 4 L7 13" stroke="#000" stroke-width="1.8"/><path d="M7.5 6 L10 6.8 L10 10.8 L7.5 11.6 Z" fill="#ddd" stroke="#000" stroke-width="1.2"/><path d="M10 5 L14.5 4.5 L14.5 13 L10 12.5 Z" fill="#bbb" stroke="#000" stroke-width="1.5"/><rect x="11" y="7" width="2" height="2.5" fill="#fff"/></svg>
<svg style="position:absolute;left:573px;top:234px" width="15" height="16"><path d="M7.5 1 L13 7 L2 7Z M7.5 8 L13 14.5 L2 14.5Z" fill="#000"/></svg>
<svg style="position:absolute;left:599px;top:234px" width="17" height="16"><path d="M4 6 Q8 1.5 12 4.5 Q15 8 12 12" fill="none" stroke="#555" stroke-width="1.8"/><path d="M1 4 L6 9 L1 9Z" fill="#555"/></svg>
<svg style="position:absolute;left:626px;top:234px" width="17" height="16"><path d="M13 6 Q9 1.5 5 4.5 Q2 8 5 12" fill="none" stroke="#555" stroke-width="1.8"/><path d="M16 4 L11 9 L16 9Z" fill="#555"/></svg>
<div style="position:absolute;left:650px;top:235px;width:12px;height:12px;background:#fff;border:1px solid #c4c3c1;box-sizing:border-box"></div>
<svg style="position:absolute;left:651px;top:236px" width="10" height="10"><path d="M1.5 5 L4 8 L8.5 1.5" fill="none" stroke="#000" stroke-width="1.6"/></svg>
<div class="t" style="left:668px;top:235.92px;font-size:12.5px;color:#111;font-weight:400;">Show</div>
<div class="t" style="left:429px;width:400px;text-align:right;top:235.75px;font-size:12.7px;color:#111;font-weight:400;">tomopitch.mod</div>
<div style="position:absolute;left:542px;top:257px;width:161px;height:75px;border:1px solid #000;box-sizing:border-box"></div>
<div style="position:absolute;left:547px;top:262px;width:47px;height:18px;background:#00ff00"></div>
<div class="t" style="left:193.5px;width:400px;text-align:right;top:264.93px;font-size:12.6px;color:#111;font-weight:400;">Object</div>
<div style="position:absolute;left:600px;top:262px;width:54px;height:18px;background:#e6e5e3;border-top:2px solid #bcbbb9;border-left:2px solid #bcbbb9;border-right:1px solid #fafafa;border-bottom:1px solid #fafafa;box-sizing:border-box"></div><div style="position:absolute;left:602px;top:264px;width:36px;height:14px;background:#00ff00;"></div><div style="position:absolute;left:638px;top:263px;width:15px;height:8px;background:#e9e8e6;border-top:1px solid #fafafa;border-bottom:1px solid #c4c3c1;box-sizing:border-box"></div><div style="position:absolute;left:638px;top:271px;width:15px;height:8px;background:#e9e8e6;border-top:1px solid #fafafa;border-bottom:1px solid #c4c3c1;box-sizing:border-box"></div><svg style="position:absolute;left:642.5px;top:265px" width="6" height="12"><path d="M1 4 L3 1.5 L5 4Z" fill="#222"/><path d="M1 8 L3 10.5 L5 8Z" fill="#222"/></svg>
<div class="t" style="left:606px;top:265.42px;font-size:12.5px;color:#111;font-weight:400;">1</div>
<div style="position:absolute;left:662px;top:262px;width:36px;height:18px;background:#00ff00"></div>
<div class="t" style="left:662.5px;top:265.02px;font-size:12.5px;color:#111;font-weight:400;">/ 1</div>
<div class="t" style="left:193.5px;width:400px;text-align:right;top:288.56px;font-size:12.8px;color:#111;font-weight:400;">Contour</div>
<div style="position:absolute;left:600px;top:286px;width:54px;height:18px;background:#e6e5e3;border-top:2px solid #bcbbb9;border-left:2px solid #bcbbb9;border-right:1px solid #fafafa;border-bottom:1px solid #fafafa;box-sizing:border-box"></div><div style="position:absolute;left:602px;top:288px;width:36px;height:14px;background:#fff;"></div><div style="position:absolute;left:638px;top:287px;width:15px;height:8px;background:#e9e8e6;border-top:1px solid #fafafa;border-bottom:1px solid #c4c3c1;box-sizing:border-box"></div><div style="position:absolute;left:638px;top:295px;width:15px;height:8px;background:#e9e8e6;border-top:1px solid #fafafa;border-bottom:1px solid #c4c3c1;box-sizing:border-box"></div><svg style="position:absolute;left:642.5px;top:289px" width="6" height="12"><path d="M1 4 L3 1.5 L5 4Z" fill="#222"/><path d="M1 8 L3 10.5 L5 8Z" fill="#222"/></svg>
<div class="t" style="left:606px;top:289.22px;font-size:12.5px;color:#111;font-weight:400;">1</div>
<div class="t" style="left:662.5px;top:288.82px;font-size:12.5px;color:#111;font-weight:400;">/ 6</div>
<div class="t" style="left:193.5px;width:400px;text-align:right;top:312.03px;font-size:12.6px;color:#111;font-weight:400;">Point</div>
<div style="position:absolute;left:600px;top:310px;width:54px;height:18px;background:#e6e5e3;border-top:2px solid #bcbbb9;border-left:2px solid #bcbbb9;border-right:1px solid #fafafa;border-bottom:1px solid #fafafa;box-sizing:border-box"></div><div style="position:absolute;left:602px;top:312px;width:36px;height:14px;background:#fff;"></div><div style="position:absolute;left:638px;top:311px;width:15px;height:8px;background:#e9e8e6;border-top:1px solid #fafafa;border-bottom:1px solid #c4c3c1;box-sizing:border-box"></div><div style="position:absolute;left:638px;top:319px;width:15px;height:8px;background:#e9e8e6;border-top:1px solid #fafafa;border-bottom:1px solid #c4c3c1;box-sizing:border-box"></div><svg style="position:absolute;left:642.5px;top:313px" width="6" height="12"><path d="M1 4 L3 1.5 L5 4Z" fill="#222"/><path d="M1 8 L3 10.5 L5 8Z" fill="#222"/></svg>
<div class="t" style="left:606px;top:312.42px;font-size:12.5px;color:#111;font-weight:400;">1</div>
<div class="t" style="left:662.5px;top:312.12px;font-size:12.5px;color:#111;font-weight:400;">/ 2</div>
<div style="position:absolute;left:706px;top:257px;width:123px;height:75px;border:1px solid #000;box-sizing:border-box"></div>
<div class="t" style="left:712px;top:265.02px;font-size:12.5px;color:#111;font-weight:400;">X</div>
<div style="position:absolute;left:726px;top:262px;width:54px;height:18px;background:#e6e5e3;border-top:2px solid #bcbbb9;border-left:2px solid #bcbbb9;border-right:1px solid #fafafa;border-bottom:1px solid #fafafa;box-sizing:border-box"></div><div style="position:absolute;left:728px;top:264px;width:36px;height:14px;background:#fff;"></div><div style="position:absolute;left:764px;top:263px;width:15px;height:8px;background:#e9e8e6;border-top:1px solid #fafafa;border-bottom:1px solid #c4c3c1;box-sizing:border-box"></div><div style="position:absolute;left:764px;top:271px;width:15px;height:8px;background:#e9e8e6;border-top:1px solid #fafafa;border-bottom:1px solid #c4c3c1;box-sizing:border-box"></div><svg style="position:absolute;left:768.5px;top:265px" width="6" height="12"><path d="M1 4 L3 1.5 L5 4Z" fill="#222"/><path d="M1 8 L3 10.5 L5 8Z" fill="#222"/></svg>
<div class="t" style="left:731px;top:265.32px;font-size:12.5px;color:#111;font-weight:400;">44</div>
<div class="t" style="left:788px;top:265.02px;font-size:12.5px;color:#111;font-weight:400;">/ 480</div>
<div class="t" style="left:712px;top:288.82px;font-size:12.5px;color:#111;font-weight:400;">Y</div>
<div style="position:absolute;left:726px;top:286px;width:54px;height:18px;background:#e6e5e3;border-top:2px solid #bcbbb9;border-left:2px solid #bcbbb9;border-right:1px solid #fafafa;border-bottom:1px solid #fafafa;box-sizing:border-box"></div><div style="position:absolute;left:728px;top:288px;width:36px;height:14px;background:#fff;"></div><div style="position:absolute;left:764px;top:287px;width:15px;height:8px;background:#e9e8e6;border-top:1px solid #fafafa;border-bottom:1px solid #c4c3c1;box-sizing:border-box"></div><div style="position:absolute;left:764px;top:295px;width:15px;height:8px;background:#e9e8e6;border-top:1px solid #fafafa;border-bottom:1px solid #c4c3c1;box-sizing:border-box"></div><svg style="position:absolute;left:768.5px;top:289px" width="6" height="12"><path d="M1 4 L3 1.5 L5 4Z" fill="#222"/><path d="M1 8 L3 10.5 L5 8Z" fill="#222"/></svg>
<div class="t" style="left:731px;top:289.12px;font-size:12.5px;color:#111;font-weight:400;">401</div>
<div class="t" style="left:788px;top:288.82px;font-size:12.5px;color:#111;font-weight:400;">/ 464</div>
<div class="t" style="left:712px;top:312.12px;font-size:12.5px;color:#111;font-weight:400;">Z</div>
<div style="position:absolute;left:726px;top:310px;width:54px;height:18px;background:#e6e5e3;border-top:2px solid #bcbbb9;border-left:2px solid #bcbbb9;border-right:1px solid #fafafa;border-bottom:1px solid #fafafa;box-sizing:border-box"></div><div style="position:absolute;left:728px;top:312px;width:36px;height:14px;background:#fff;"></div><div style="position:absolute;left:764px;top:311px;width:15px;height:8px;background:#e9e8e6;border-top:1px solid #fafafa;border-bottom:1px solid #c4c3c1;box-sizing:border-box"></div><div style="position:absolute;left:764px;top:319px;width:15px;height:8px;background:#e9e8e6;border-top:1px solid #fafafa;border-bottom:1px solid #c4c3c1;box-sizing:border-box"></div><svg style="position:absolute;left:768.5px;top:313px" width="6" height="12"><path d="M1 4 L3 1.5 L5 4Z" fill="#222"/><path d="M1 8 L3 10.5 L5 8Z" fill="#222"/></svg>
<div class="t" style="left:731px;top:312.42px;font-size:12.5px;color:#111;font-weight:400;">415</div>
<div class="t" style="left:788px;top:312.12px;font-size:12.5px;color:#111;font-weight:400;">/ 500</div>
<div class="t" style="left:542.3px;top:340.30px;font-size:12.4px;color:#111;font-weight:400;">Black</div>
<div class="t" style="left:542.3px;top:360.70px;font-size:12.4px;color:#111;font-weight:400;">White</div>
<div style="position:absolute;left:581px;top:344px;width:136px;height:3px;background:#d3d2d0;border-top:1px solid #c0bfbd;box-sizing:border-box"></div>
<div style="position:absolute;left:581px;top:365px;width:136px;height:3px;background:#d3d2d0;border-top:1px solid #c0bfbd;box-sizing:border-box"></div>
<div style="position:absolute;left:636px;top:338px;width:11px;height:16px;background:linear-gradient(#f4f4f4,#e2e2e2);border:1px solid #bcbbb9;border-radius:2px;box-sizing:border-box"></div>
<div style="position:absolute;left:661px;top:359px;width:11px;height:16px;background:linear-gradient(#f4f4f4,#e2e2e2);border:1px solid #bcbbb9;border-radius:2px;box-sizing:border-box"></div>
<div class="t" style="left:344.5px;width:400px;text-align:right;top:340.22px;font-size:12.5px;color:#111;font-weight:400;">112</div>
<div class="t" style="left:344.5px;width:400px;text-align:right;top:360.62px;font-size:12.5px;color:#111;font-weight:400;">161</div>
<div style="position:absolute;left:542px;top:382px;width:13px;height:12px;background:#fff;border:1px solid #c4c3c1;box-sizing:border-box"></div>
<div class="t" style="left:560.5px;top:382.72px;font-size:12.5px;color:#111;font-weight:400;">Float</div>
<div style="position:absolute;left:626px;top:382px;width:12px;height:12px;background:#fff;border:1px solid #c4c3c1;box-sizing:border-box"></div>
<div class="t" style="left:644px;top:382.72px;font-size:12.5px;color:#111;font-weight:400;">Subarea</div>
<div style="position:absolute;left:709px;top:379px;width:36px;height:20px;background:#ebeae8;border:1px solid #c4c3c1;border-bottom:2px solid #b4b3b1;border-radius:2px;box-sizing:border-box"></div>
<div class="t" style="left:427px;width:600px;text-align:center;top:382.72px;font-size:12.5px;color:#111;font-weight:400;">Auto</div>
<div style="position:absolute;left:755px;top:342px;width:73px;height:59px;border:1px solid #cfcecc;box-sizing:border-box"></div>
<div style="position:absolute;left:764px;top:336px;width:34px;height:10px;background:#edecea"></div>
<div class="t" style="left:765.8px;top:337.12px;font-size:12.5px;color:#111;font-weight:400;">Mode</div>
<div style="position:absolute;left:762px;top:356px;width:11px;height:11px;background:#fff;border:1px solid #c4c3c1;border-radius:50%;box-sizing:border-box"></div>
<div class="t" style="left:780.5px;top:355.92px;font-size:12.5px;color:#111;font-weight:400;">Movie</div>
<div style="position:absolute;left:762px;top:380px;width:11px;height:11px;background:#fff;border:1px solid #c4c3c1;border-radius:50%;box-sizing:border-box"></div>
<div style="position:absolute;left:765.5px;top:383.5px;width:4px;height:4px;background:#000;border-radius:50%"></div>
<div class="t" style="left:780.5px;top:380.02px;font-size:12.5px;color:#111;font-weight:400;">Model</div>
<div style="position:absolute;left:535px;top:407px;width:300px;height:50px;background:#fff;border-top:2px solid #c4c3c1;border-left:2px solid #c4c3c1;border-right:1px solid #f4f4f4;border-bottom:1px solid #f4f4f4;box-sizing:border-box"></div>
<div class="t" style="left:541.5px;top:412.29px;font-size:12.3px;color:#111;font-weight:400;">Flipping image data.</div>
<div class="t" style="left:541.5px;top:425.79px;font-size:12.3px;color:#111;font-weight:400;">3dmod 4.9.3 Copyright 1994-2017</div>
<div class="t" style="left:541.5px;top:439.79px;font-size:12.3px;color:#111;font-weight:400;">Regents of the Univ. of Colo.</div>
<div style="position:absolute;left:818px;top:408px;width:16px;height:48px;background:#e4e3e1"></div>
<div style="position:absolute;left:818px;top:408px;width:16px;height:15px;background:#ebeae8;border:1px solid #d0cfcd;border-bottom:2px solid #c0bfbd;box-sizing:border-box"></div>
<div style="position:absolute;left:818px;top:431px;width:16px;height:8px;background:#ebeae8;border:1px solid #d0cfcd;box-sizing:border-box"></div>
<div style="position:absolute;left:818px;top:440px;width:16px;height:15px;background:#ebeae8;border:1px solid #d0cfcd;border-bottom:2px solid #c0bfbd;box-sizing:border-box"></div>
<svg style="position:absolute;left:822px;top:412px" width="9" height="40"><path d="M0.5 5 L4.5 1 L8.5 5Z" fill="#000"/><path d="M0.5 34 L4.5 38 L8.5 34Z" fill="#000"/></svg></div></div></div>
</body></html>
